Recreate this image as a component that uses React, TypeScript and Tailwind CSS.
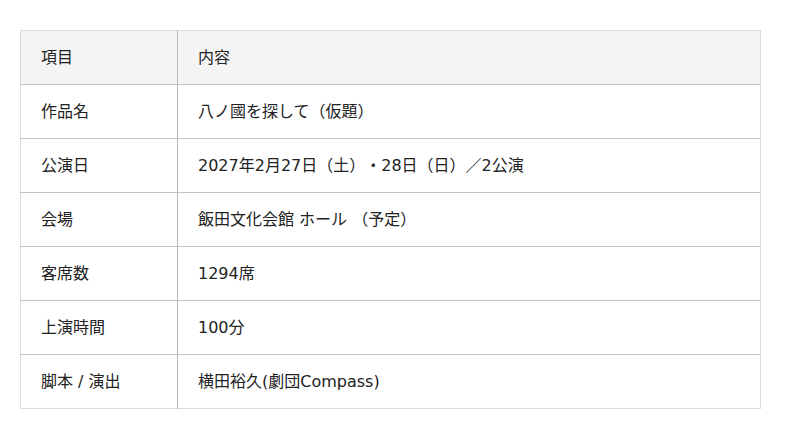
const rows: [string, string][] = [
  ['作品名', '八ノ國を探して（仮題）'],
  ['公演日', '2027年2月27日（土）・28日（日）／2公演'],
  ['会場', '飯田文化会館 ホール （予定）'],
  ['客席数', '1294席'],
  ['上演時間', '100分'],
  ['脚本 / 演出', '横田裕久(劇団Compass)'],
];

export default function App() {
  return (
    <div
      className="min-h-screen bg-white px-5 pt-[30px] text-[16px] text-[#222] [text-spacing-trim:space-all]"
      style={{ fontFamily: '"DejaVu Sans", "Noto Sans CJK JP", sans-serif' }}
    >
      <table className="w-[741px] border-collapse border border-[#dcdcdc]">
        <thead>
          <tr className="h-[54px] bg-[#f4f4f4]">
            <th className="w-[157px] border-r border-[#b8b8b8] pl-5 text-left font-normal">項目</th>
            <th className="pl-5 text-left font-normal">内容</th>
          </tr>
        </thead>
        <tbody>
          {rows.map(([label, value]) => (
            <tr key={label} className="h-[54px] border-t border-[#c4c4c4]">
              <td className="border-r border-[#b8b8b8] pl-5">{label}</td>
              <td className="pl-5">{value}</td>
            </tr>
          ))}
        </tbody>
      </table>
    </div>
  );
}
